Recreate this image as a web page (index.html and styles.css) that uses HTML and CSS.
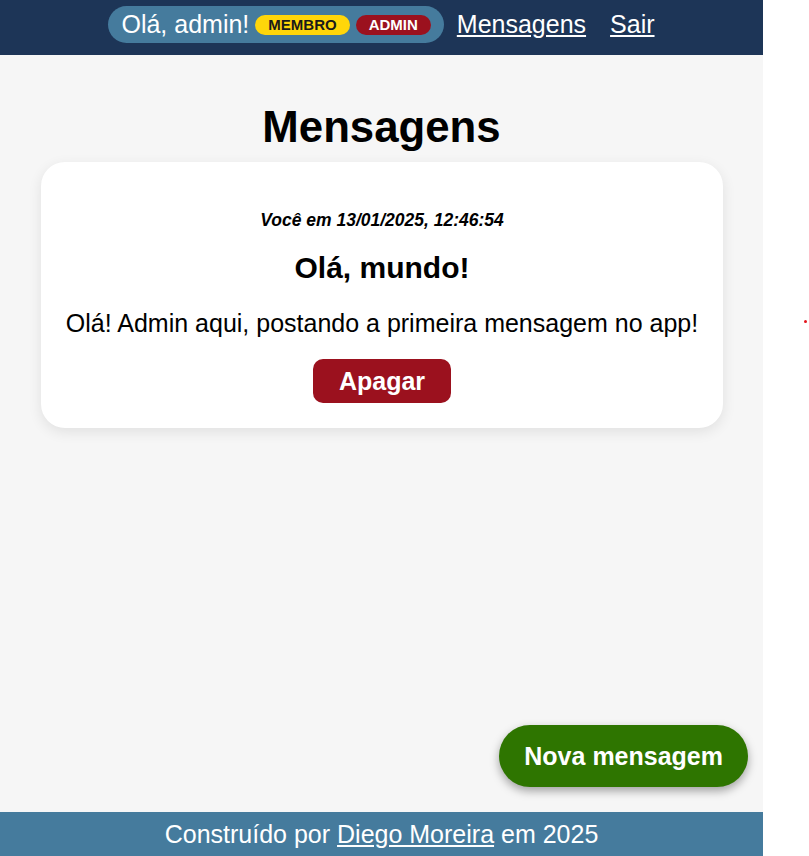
FILE: index.html
```html
<!DOCTYPE html>
<html lang="pt-BR">
<head>
<meta charset="utf-8">
<title>Mensagens</title>
<link rel="stylesheet" href="styles.css">
</head>
<body>
<div class="page">
  <header class="topbar">
    <div class="greeting">
      <span class="greeting-text">Olá, admin!</span>
      <span class="badge badge-member">MEMBRO</span>
      <span class="badge badge-admin">ADMIN</span>
    </div>
    <a class="nav-link" href="#">Mensagens</a>
    <a class="nav-link nav-link-last" href="#">Sair</a>
  </header>
  <main class="content">
    <h1 class="title">Mensagens</h1>
    <article class="card">
      <p class="meta">Você em 13/01/2025, 12:46:54</p>
      <h2 class="card-title">Olá, mundo!</h2>
      <p class="card-body">Olá! Admin aqui, postando a primeira mensagem no app!</p>
      <button class="btn-delete" type="button">Apagar</button>
    </article>
    <button class="btn-new" type="button">Nova mensagem</button>
  </main>
  <footer class="footer">Construído por <a class="footer-link" href="#">Diego Moreira</a> em 2025</footer>
</div>
<span class="dot"></span>
</body>
</html>
```
FILE: styles.css
```css
* { box-sizing: border-box; }

html, body {
  margin: 0;
  padding: 0;
  background: #ffffff;
}

body {
  font-family: "Liberation Sans", Arial, sans-serif;
  font-size: 25px;
  color: #000;
  position: relative;
}

.page {
  width: 763px;
  min-height: 856px;
  display: flex;
  flex-direction: column;
  background: #f6f6f6;
  position: relative;
}

.topbar {
  background: #1d3557;
  height: 55px;
  padding: 6px 0 12px;
  display: flex;
  justify-content: center;
  align-items: center;
  gap: 13px;
}

.greeting {
  background: #457b9d;
  color: #fff;
  height: 37px;
  border-radius: 19px;
  padding: 0 13px;
  display: flex;
  align-items: center;
  gap: 6px;
  line-height: 1;
}

.badge {
  font-size: 15px;
  font-weight: bold;
  height: 20px;
  line-height: 20px;
  border-radius: 10px;
  padding: 0 13px;
  margin-top: 1px;
}

.badge-member {
  background: #ffd60a;
  color: #1a1a1a;
}

.badge-admin {
  background: #9b111e;
  color: #fff;
}

.nav-link {
  color: #fff;
  text-decoration: underline;
  line-height: 1;
  margin-bottom: 1px;
}

.nav-link-last {
  margin-left: 11px;
}

.content {
  flex: 1;
  display: flex;
  flex-direction: column;
  align-items: center;
}

.title {
  font-size: 43.75px;
  font-weight: bold;
  margin: 47px 0 10px;
  line-height: normal;
}

.card {
  width: 682px;
  margin-left: 1px;
  background: #fff;
  border-radius: 24px;
  box-shadow: 0 4px 14px rgba(0, 0, 0, 0.09);
  padding: 48px 20px 25px;
  display: flex;
  flex-direction: column;
  align-items: center;
  text-align: center;
}

.meta {
  margin: 0;
  font-size: 17.5px;
  font-style: italic;
  font-weight: bold;
  line-height: normal;
}

.card-title {
  margin: 20px 0 0;
  font-size: 30px;
  font-weight: bold;
  line-height: normal;
}

.card-body {
  margin: 24px 0 0;
  font-size: 25px;
  line-height: normal;
}

.btn-delete {
  margin-top: 21px;
  font-family: inherit;
  font-size: 25px;
  font-weight: bold;
  color: #fff;
  background: #9b111e;
  border: none;
  border-radius: 10px;
  height: 44px;
  padding: 0 26px;
  line-height: 1;
}

.btn-new {
  position: absolute;
  right: 15px;
  bottom: 69px;
  font-family: inherit;
  font-size: 25px;
  font-weight: bold;
  color: #fff;
  background: #2e7500;
  border: none;
  border-radius: 31px;
  height: 62px;
  padding: 0 25px;
  line-height: 1;
  box-shadow: 0 4px 10px rgba(0, 0, 0, 0.35);
}

.footer {
  background: #457b9d;
  color: #fff;
  text-align: center;
  height: 44px;
  line-height: 44px;
  font-size: 25px;
}

.footer-link {
  color: #fff;
  text-decoration: underline;
}

.dot {
  position: absolute;
  left: 804px;
  top: 320px;
  width: 3px;
  height: 3px;
  border-radius: 50%;
  background: #e3141c;
}
```
